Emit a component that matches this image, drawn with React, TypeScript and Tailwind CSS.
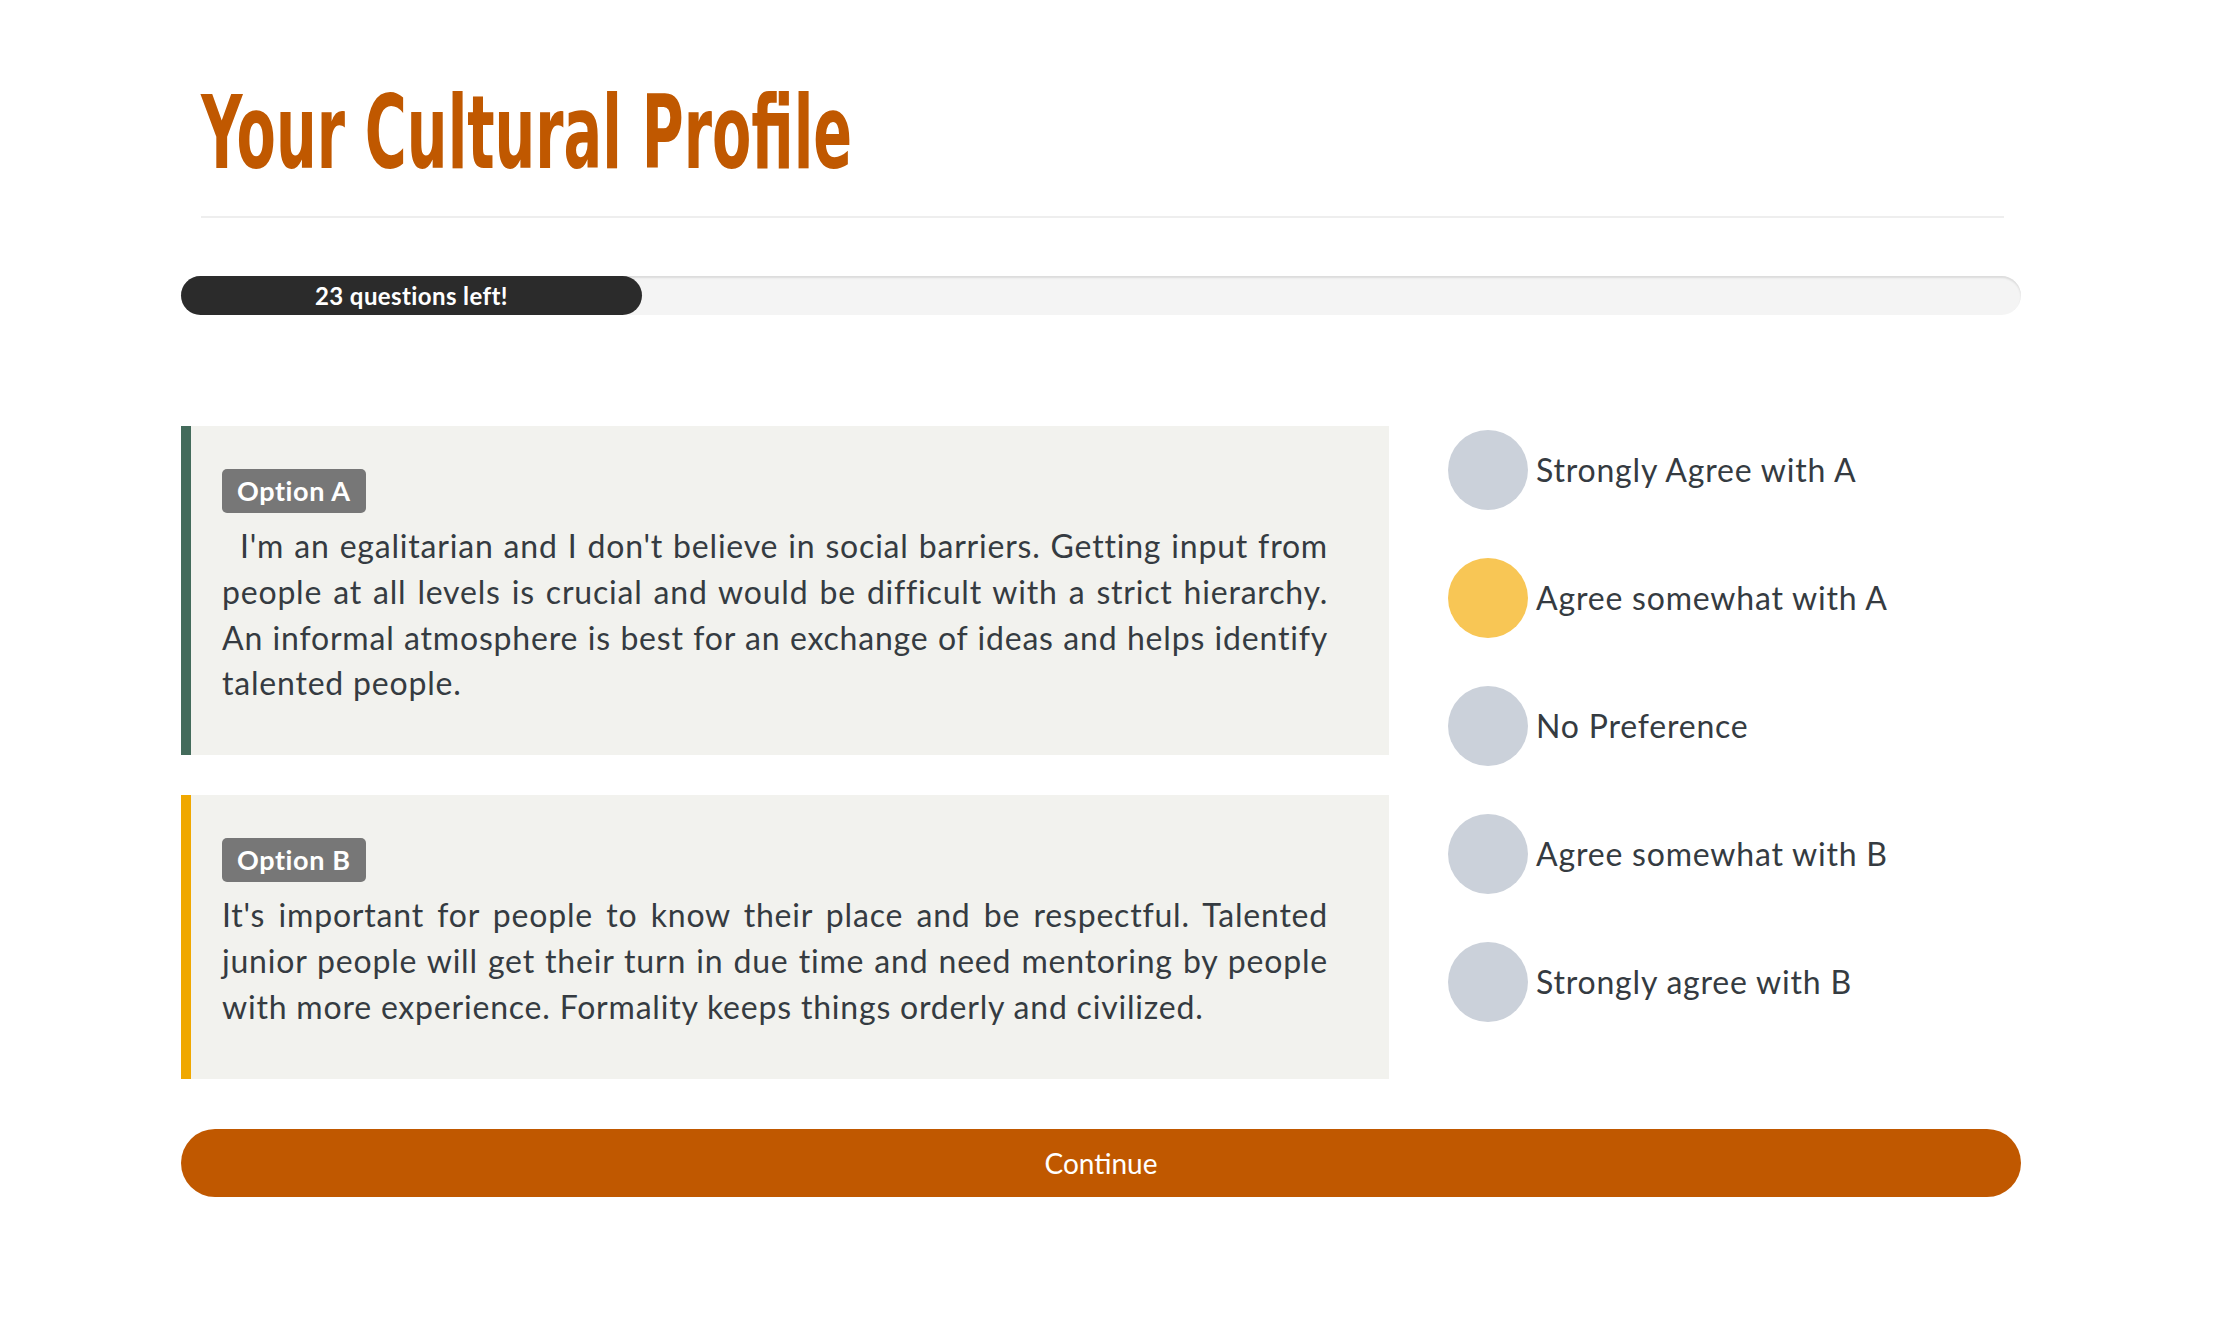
import React from 'react'

const body = { fontFamily: '"Lato", "Open Sans", sans-serif' }

const choices = [
    { label: 'Strongly Agree with A', active: false },
    { label: 'Agree somewhat with A', active: true },
    { label: 'No Preference', active: false },
    { label: 'Agree somewhat with B', active: false },
    { label: 'Strongly agree with B', active: false },
]

function OptionCard({ tag, text, border, indent }: { tag: string; text: string; border: string; indent?: boolean }) {
    return (
        <div className={`bg-[#f2f2ee] border-l-[10px] ${border} pl-[31px] pr-[61px] pt-[43px] pb-[49px]`}>
            <span className="inline-block bg-[#777777] text-white font-bold text-[27px] tracking-[0.6px] leading-[44px] h-[44px] px-[15px] rounded-[5px]">
                {tag}
            </span>
            <p className={`mt-[10px] text-[32px] tracking-[0.8px] leading-[45.8px] text-[#353b41] text-justify ${indent ? 'indent-[18px]' : ''}`}>
                {text}
            </p>
        </div>
    )
}

export default function App() {
    return (
        <div className="min-h-[1338px] bg-white" style={body}>
            <div className="w-[1840px] ml-[181px] pt-[76px]">

                {/* Header */}
                <div className="px-[20px] pr-[17px]">
                    <h1
                        className="text-[#c05800] text-[101px] leading-[114px] font-bold font-stretch-condensed origin-left scale-x-[0.63] whitespace-nowrap"
                        style={{ fontFamily: '"Liberation Sans Narrow", "DejaVu Sans", sans-serif' }}
                    >
                        Your Cultural Profile
                    </h1>
                    <div className="mt-[26px] h-[2px] bg-[#eeeeee]" />
                </div>

                {/* Progress */}
                <div className="mt-[58px] h-[39px] rounded-full bg-[#f4f4f4] shadow-[inset_0_2px_2px_rgba(0,0,0,0.1)] flex">
                    <div className="w-[461px] h-full rounded-full bg-[#2b2b2b] flex items-center justify-center">
                        <span className="text-white font-bold text-[24px] tracking-[0.4px]">23 questions left!</span>
                    </div>
                </div>

                {/* Question */}
                <div className="mt-[111px] flex">
                    <div className="w-[1208px] flex flex-col gap-[40px]">
                        <OptionCard
                            tag="Option A"
                            border="border-[#436b5b]"
                            indent
                            text="I'm an egalitarian and I don't believe in social barriers. Getting input from people at all levels is crucial and would be difficult with a strict hierarchy. An informal atmosphere is best for an exchange of ideas and helps identify talented people."
                        />
                        <OptionCard
                            tag="Option B"
                            border="border-[#f0a800]"
                            text="It's important for people to know their place and be respectful. Talented junior people will get their turn in due time and need mentoring by people with more experience. Formality keeps things orderly and civilized."
                        />
                    </div>

                    <div className="ml-[59px] pt-[4px] flex flex-col gap-[48px]">
                        {choices.map((c) => (
                            <div key={c.label} className="flex items-center gap-[8px]">
                                <span className={`w-[80px] h-[80px] rounded-full ${c.active ? 'bg-[#f8c655]' : 'bg-[#cbd1da]'}`} />
                                <span className="text-[32px] tracking-[0.8px] text-[#353b41]">{c.label}</span>
                            </div>
                        ))}
                    </div>
                </div>

                {/* Continue */}
                <button className="mt-[50px] w-full h-[68px] rounded-full bg-[#c05800] text-white text-[28px]">
                    Continue
                </button>
            </div>
        </div>
    )
}
